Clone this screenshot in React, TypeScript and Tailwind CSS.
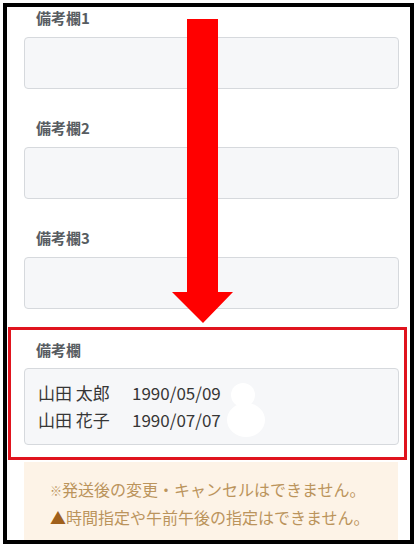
export default function App() {
  const font = { fontFamily: '"Noto Sans CJK JP", "Noto Sans", sans-serif' };

  return (
    <div className="w-[420px] h-[550px] bg-white pt-[3px] pl-[3px]" style={font}>
      <div className="relative w-[411px] h-[541px] border-4 border-black bg-white overflow-hidden flex flex-col">
        {/* 備考欄1〜3 */}
        <div className="pl-[29px] mt-[1px] h-[20px] leading-[20px] text-[15px] font-bold text-[#575c61]">備考欄1</div>
        <div className="ml-[17px] mt-[9px] w-[375px] h-[52px] rounded-[4px] border-[1.5px] border-[#d6d9dd] bg-[#f6f7f9]" />

        <div className="pl-[29px] mt-[29px] h-[20px] leading-[20px] text-[15px] font-bold text-[#575c61]">備考欄2</div>
        <div className="ml-[17px] mt-[9px] w-[375px] h-[52px] rounded-[4px] border-[1.5px] border-[#d6d9dd] bg-[#f6f7f9]" />

        <div className="pl-[29px] mt-[29px] h-[20px] leading-[20px] text-[15px] font-bold text-[#575c61]">備考欄3</div>
        <div className="ml-[17px] mt-[9px] w-[375px] h-[52px] rounded-[4px] border-[1.5px] border-[#d6d9dd] bg-[#f6f7f9]" />

        {/* 入力例 */}
        <div className="ml-[1px] mt-[18px] w-[399px] h-[133px] border-[3px] border-[#e0141e] flex flex-col">
          <div className="pl-[25px] mt-[10px] h-[20px] leading-[20px] text-[15px] font-bold text-[#575c61]">備考欄</div>
          <div className="relative ml-[13px] mt-[8px] w-[375px] h-[77px] rounded-[4px] border-[1.5px] border-[#d6d9dd] bg-[#f6f7f9] pl-[13px] pt-[10px] text-[17px] leading-[27px] text-[#363636]">
            <div className="flex">
              <span className="w-[94px]">山田 太郎</span>
              <span>1990/05/09</span>
            </div>
            <div className="flex">
              <span className="w-[94px]">山田 花子</span>
              <span>1990/07/07</span>
            </div>
            <div className="absolute left-[206px] top-[14px] w-[24px] h-[24px] rounded-full bg-white" />
            <div className="absolute left-[202px] top-[34px] w-[38px] h-[34px] rounded-[50%] bg-white" />
          </div>
        </div>

        {/* 注意書き */}
        <div className="ml-[17px] mt-[2px] w-[374px] flex-1 bg-[#fdf3e7] pl-[26px] pt-[14px] text-[16px] leading-[27px] text-[#bb945c]">
          <div>
            <span className="text-[12px]">※</span>発送後の変更・キャンセルはできません。
          </div>
          <div>
            <span className="text-[#a0601c]">▲</span>時間指定や午前午後の指定はできません。
          </div>
        </div>

        {/* 矢印 */}
        <svg className="absolute left-[165px] top-[12px]" width="61" height="305" viewBox="0 0 61 305">
          <polygon points="15,0 46,0 46,273 61,273 31,304 0,273 15,273" fill="#ff0000" />
        </svg>
      </div>
    </div>
  );
}
